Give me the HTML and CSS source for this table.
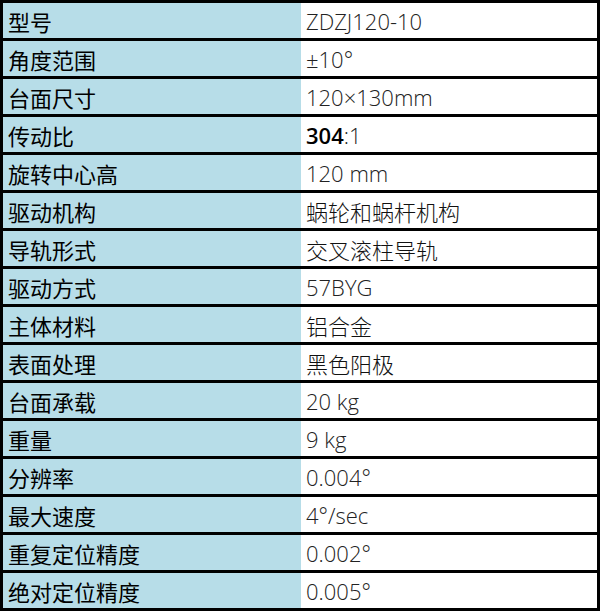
FILE: index.html
```html
<!DOCTYPE html>
<html lang="zh">
<head>
<meta charset="utf-8">
<link rel="stylesheet" href="styles.css">
</head>
<body>
<div class="spec">
  <div class="row"><div class="k">型号</div><div class="v">ZDZJ120-10</div></div>
  <div class="row"><div class="k">角度范围</div><div class="v">±10°</div></div>
  <div class="row"><div class="k">台面尺寸</div><div class="v">120×130mm</div></div>
  <div class="row"><div class="k">传动比</div><div class="v"><b class="strong">304</b>:1</div></div>
  <div class="row"><div class="k">旋转中心高</div><div class="v">120 mm</div></div>
  <div class="row"><div class="k">驱动机构</div><div class="v cjk">蜗轮和蜗杆机构</div></div>
  <div class="row"><div class="k">导轨形式</div><div class="v cjk">交叉滚柱导轨</div></div>
  <div class="row"><div class="k">驱动方式</div><div class="v">57BYG</div></div>
  <div class="row"><div class="k">主体材料</div><div class="v cjk">铝合金</div></div>
  <div class="row"><div class="k">表面处理</div><div class="v cjk">黑色阳极</div></div>
  <div class="row"><div class="k">台面承载</div><div class="v">20 kg</div></div>
  <div class="row"><div class="k">重量</div><div class="v">9 kg</div></div>
  <div class="row"><div class="k">分辨率</div><div class="v">0.004°</div></div>
  <div class="row"><div class="k">最大速度</div><div class="v">4°/sec</div></div>
  <div class="row"><div class="k">重复定位精度</div><div class="v">0.002°</div></div>
  <div class="row"><div class="k">绝对定位精度</div><div class="v">0.005°</div></div>
</div>
</body>
</html>
```
FILE: styles.css
```css
html, body {
  margin: 0;
  padding: 0;
  background: #fff;
}
.spec {
  width: 594px;
  border: 3px solid #000;
  display: flex;
  flex-direction: column;
}
.row {
  display: grid;
  grid-template-columns: 298px 296px;
  height: 35px;
  border-top: 3px solid #000;
}
.row:first-child {
  border-top: none;
}
.k {
  background: #b7dde8;
  font-family: "Noto Sans CJK SC", sans-serif;
  font-size: 22px;
  color: #000;
  padding-left: 5px;
  padding-top: 1px;
  display: flex;
  align-items: center;
  line-height: 1;
}
.v {
  background: #fff;
  font-family: "Open Sans", "Noto Sans CJK SC", sans-serif;
  font-weight: 300;
  font-size: 22px;
  color: #222;
  padding-left: 5px;
  padding-top: 1px;
  display: flex;
  align-items: center;
  line-height: 1;
}
.v.cjk {
  font-family: "Noto Sans CJK SC", sans-serif;
  font-weight: 300;
  font-size: 22px;
  color: #111;
}
.strong {
  font-weight: 600;
  color: #000;
}
```
